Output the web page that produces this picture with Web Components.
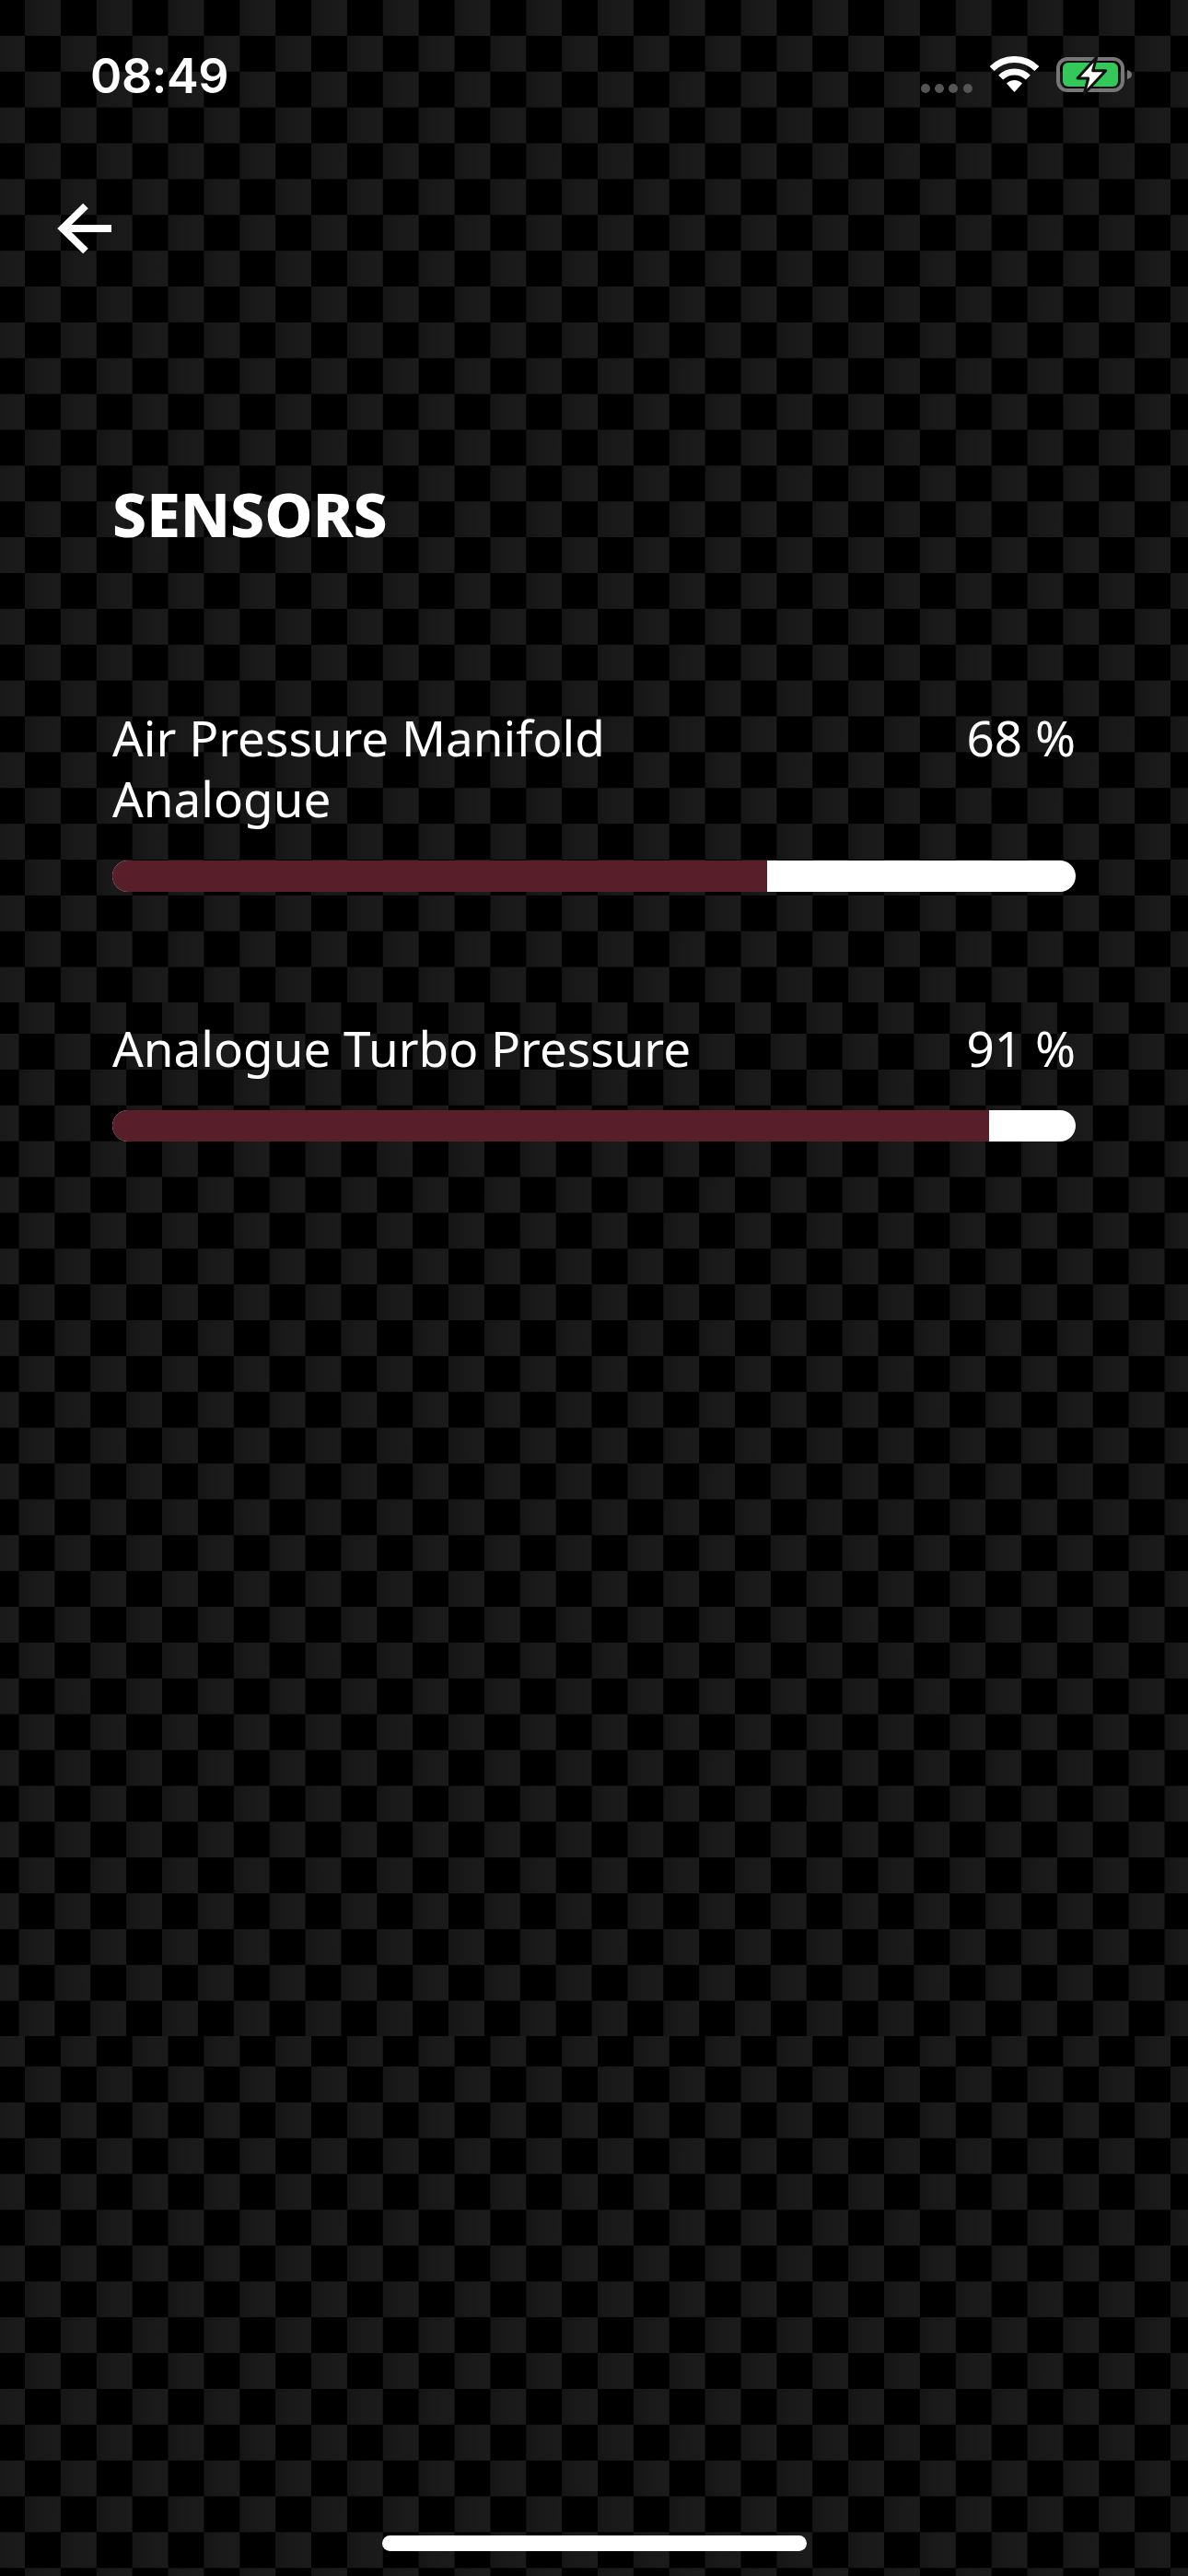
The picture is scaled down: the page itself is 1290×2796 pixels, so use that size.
<!doctype html>
<html>
<head>
<meta charset="utf-8">
<title>Sensors</title>
<style>
  html, body { margin: 0; background: #000; }
</style>
</head>
<body>
<sensors-screen>
  <span slot="title">SENSORS</span>
  <sensor-row value="68">Air Pressure Manifold Analogue</sensor-row>
  <sensor-row value="91">Analogue Turbo Pressure</sensor-row>
</sensors-screen>

<script>
const CELL = 38.875;
const cells = `
  <rect width="${CELL}" height="${CELL}" fill="url(#cellFill)"/>
  <rect x="${CELL}" y="${CELL}" width="${CELL}" height="${CELL}" fill="url(#cellFill)"/>`;
const bgTemplate = document.createElement('template');
bgTemplate.innerHTML = `
  <style>
    :host { display: block; position: absolute; inset: 0; overflow: hidden; background: #000; }
    svg { display: block; width: 1290px; filter: blur(.7px); }
  </style>
  <svg height="2796" viewBox="0 0 1290 2796" aria-hidden="true">
    <defs>
      <linearGradient id="cellFill" x1="0" x2="1" y1="0" y2="0">
        <stop offset="0" stop-color="#151515"/>
        <stop offset=".4" stop-color="#191919"/>
        <stop offset="1" stop-color="#1b1b1b"/>
      </linearGradient>
      <pattern id="bandA" patternUnits="userSpaceOnUse" width="${CELL * 2}" height="${CELL * 2}" x="27" y="0">${cells}</pattern>
      <pattern id="bandB" patternUnits="userSpaceOnUse" width="${CELL * 2}" height="${CELL * 2}" x="20.5" y="${1122 - CELL}">${cells}</pattern>
      <pattern id="bandC" patternUnits="userSpaceOnUse" width="${CELL * 2}" height="${CELL * 2}" x="27" y="2243">${cells}</pattern>
    </defs>
    <rect x="0" y="0" width="1290" height="1088" fill="url(#bandA)"/>
    <rect x="0" y="1088" width="1290" height="1122" fill="url(#bandB)"/>
    <rect x="0" y="2210" width="1290" height="586" fill="url(#bandC)"/>
  </svg>
`;
class CarbonBg extends HTMLElement {
  constructor() {
    super();
    this.attachShadow({ mode: 'open' }).appendChild(bgTemplate.content.cloneNode(true));
  }
}
customElements.define('carbon-bg', CarbonBg);

/* ---- status-bar ---- */
const statusTemplate = document.createElement('template');
statusTemplate.innerHTML = `
  <style>
    :host {
      display: flex;
      align-items: flex-start;
      height: 130px;
      box-sizing: border-box;
      padding: 60px 61px 0 98px;
      color: #fff;
    }
    .time {
      font: 600 52px/46px Inter, "Liberation Sans", sans-serif;
      margin-right: auto;
      letter-spacing: -.4px;
    }
    .right { display: flex; align-items: flex-start; gap: 19px; }
    svg { display: block; }
    .dots { margin-top: 31px; }
    .wifi { margin-top: 1px; }
  </style>
  <span class="time">08:49</span>
  <div class="right">
    <svg class="dots" width="56" height="10" viewBox="0 0 56 10" aria-hidden="true">
      <circle cx="5" cy="5" r="5" fill="#555"/>
      <circle cx="20" cy="5" r="5" fill="#555"/>
      <circle cx="35" cy="5" r="5" fill="#555"/>
      <circle cx="51" cy="5" r="5" fill="#555"/>
    </svg>
    <svg class="wifi" width="53" height="40" viewBox="0 0 53 40" aria-hidden="true">
      <path d="M2.1 13.6A34.5 34.5 0 0 1 50.9 13.6" fill="none" stroke="#fff" stroke-width="7"/>
      <path d="M11.65 23.15A21 21 0 0 1 41.35 23.15" fill="none" stroke="#fff" stroke-width="7"/>
      <path d="M26.5 39L18 29.5A12 12 0 0 1 35 29.5Z" fill="#fff"/>
    </svg>
    <svg width="82" height="44" viewBox="0 0 82 44" aria-hidden="true">
      <rect x="2" y="4" width="70" height="34" rx="10" fill="none" stroke="#777" stroke-width="4"/>
      <rect x="7" y="8" width="60" height="26" rx="6" fill="#34c759"/>
      <path d="M77 16v10c2.700-.6 5-2.500 5-5s-2.300-4.400-5-5z" fill="#777"/>
      <path d="M43.700 2.300L23 25H34.700L30.300 41.700L53.700 16.700H39.700Z" fill="#fff" stroke="#111" stroke-width="3" stroke-linejoin="round"/>
    </svg>
  </div>
`;
class StatusBar extends HTMLElement {
  constructor() {
    super();
    this.attachShadow({ mode: 'open' }).appendChild(statusTemplate.content.cloneNode(true));
  }
}
customElements.define('status-bar', StatusBar);

/* ---- back-button ---- */
const backTemplate = document.createElement('template');
backTemplate.innerHTML = `
  <style>
    :host { display: block; width: 64px; height: 64px; margin-left: 60px; cursor: pointer; }
    svg { display: block; }
  </style>
  <svg width="64" height="64" viewBox="0 0 64 64" aria-hidden="true">
    <path d="M61 32H8M33 7.500L8 32L33 56.500" fill="none" stroke="#fff" stroke-width="8"/>
  </svg>
`;
class BackButton extends HTMLElement {
  constructor() {
    super();
    this.attachShadow({ mode: 'open' }).appendChild(backTemplate.content.cloneNode(true));
    this.setAttribute('role', 'button');
    this.setAttribute('aria-label', 'Back');
  }
}
customElements.define('back-button', BackButton);

/* ---- sensor-row: label and value over a progress track ---- */
const rowTemplate = document.createElement('template');
rowTemplate.innerHTML = `
  <style>
    :host {
      display: flex;
      flex-direction: column;
      gap: 34px;
      color: #fff;
      font: 400 53px/66px "Noto Sans", "Open Sans", sans-serif;
    }
    .head { display: flex; justify-content: space-between; align-items: flex-start; }
    .label { width: 70%; }
    .value { white-space: pre; }
    .track { height: 34px; background: #fff; border-radius: 17px; overflow: hidden; }
    .fill { height: 100%; background: #581f2b; }
  </style>
  <div class="head">
    <div class="label"><slot></slot></div>
    <div class="value"></div>
  </div>
  <div class="track"><div class="fill"></div></div>
`;
class SensorRow extends HTMLElement {
  static observedAttributes = ['value'];

  #value;
  #fill;

  constructor() {
    super();
    const root = this.attachShadow({ mode: 'open' });
    root.appendChild(rowTemplate.content.cloneNode(true));
    this.#value = root.querySelector('.value');
    this.#fill = root.querySelector('.fill');
  }

  attributeChangedCallback() {
    const v = Number(this.getAttribute('value')) || 0;
    this.#value.textContent = `${v} %`;
    this.#fill.style.width = `${v}%`;
  }
}
customElements.define('sensor-row', SensorRow);

/* ---- sensors-screen: the page itself ---- */
const screenTemplate = document.createElement('template');
screenTemplate.innerHTML = `
  <style>
    :host {
      display: block;
      position: relative;
      width: 1290px;
      height: 2796px;
      overflow: hidden;
    }
    .content {
      position: relative;
      display: flex;
      flex-direction: column;
      height: 100%;
    }
    back-button { margin-top: 86px; }
    .title {
      margin: 237px 122px 171px;
      color: #fff;
      font: 800 66px/80px "Noto Sans", "Open Sans", sans-serif;
    }
    .rows { display: flex; flex-direction: column; gap: 137px; padding: 0 122px; }
    .home {
      width: 461px;
      height: 17px;
      margin: auto auto 27px;
      border-radius: 9px;
      background: #fff;
    }
  </style>
  <carbon-bg></carbon-bg>
  <div class="content">
    <status-bar></status-bar>
    <back-button></back-button>
    <div class="title"><slot name="title"></slot></div>
    <div class="rows"><slot></slot></div>
    <div class="home"></div>
  </div>
`;
class SensorsScreen extends HTMLElement {
  constructor() {
    super();
    this.attachShadow({ mode: 'open' }).appendChild(screenTemplate.content.cloneNode(true));
  }
}
customElements.define('sensors-screen', SensorsScreen);
</script>
</body>
</html>
